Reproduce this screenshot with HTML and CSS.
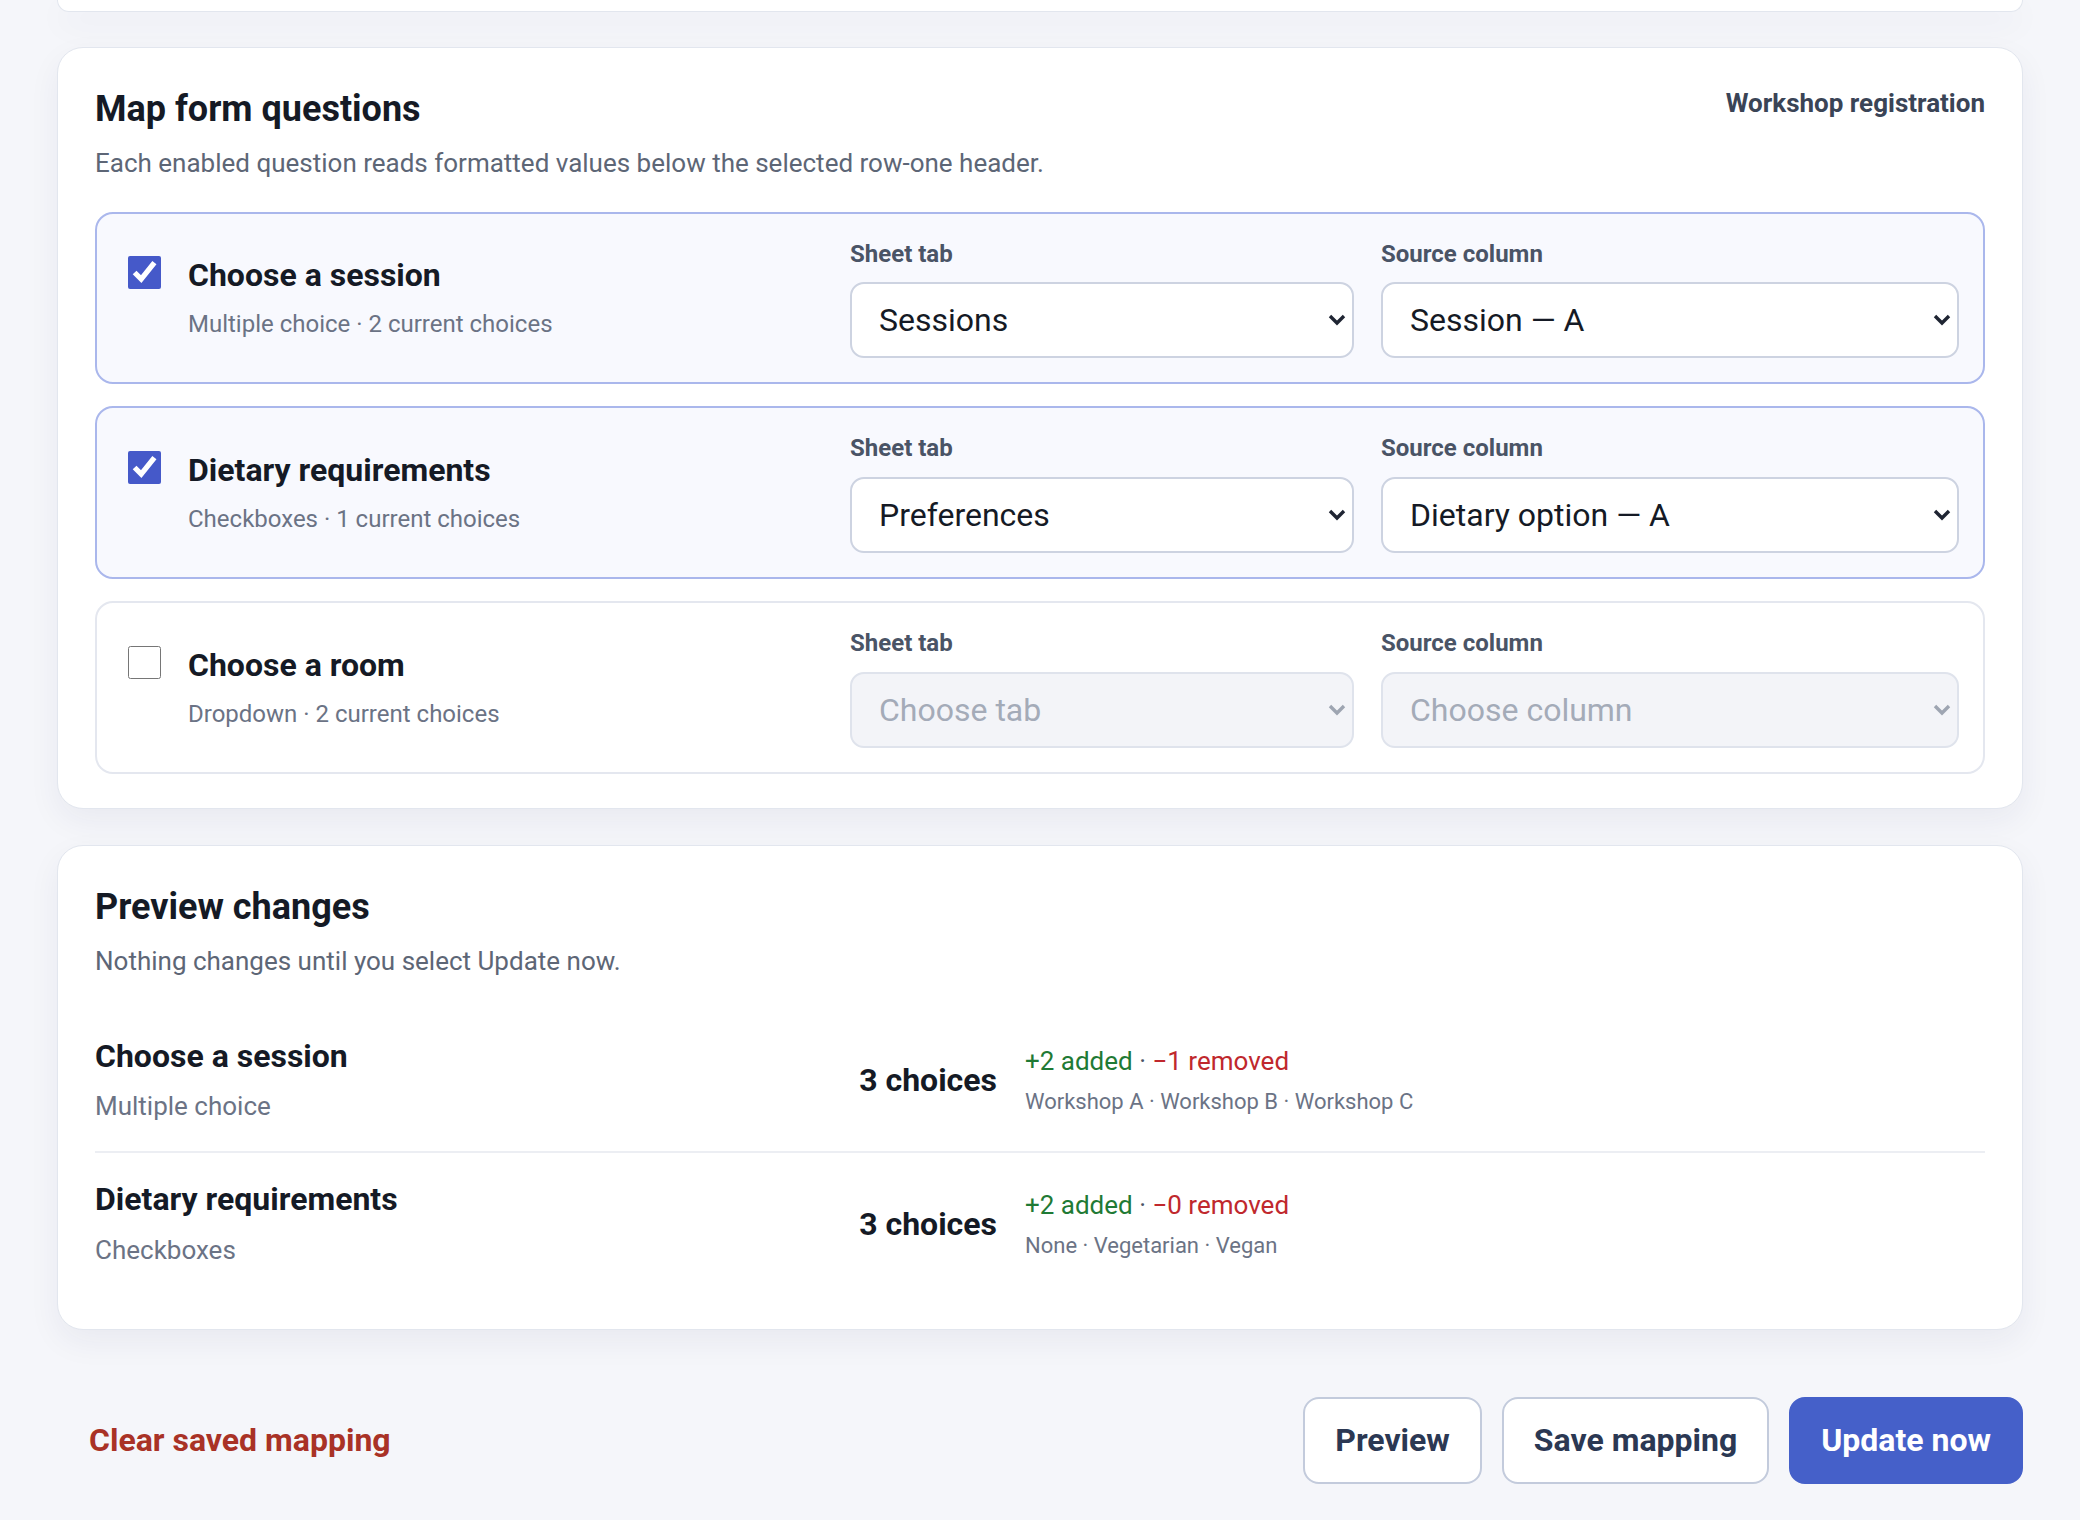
FILE: index.html
```html
<!DOCTYPE html>
<html>
  <head>
    <meta charset="UTF-8" />
    <title>Map form questions</title>
    <link rel="stylesheet" href="styles.css">
  </head>
  <body>
    <div class="page">
      <div class="card card-stub"></div>

      <section class="card">
        <header class="card-head">
          <div>
            <h2>Map form questions</h2>
            <p class="card-sub">Each enabled question reads formatted values below the selected row-one header.</p>
          </div>
          <span class="form-name">Workshop registration</span>
        </header>

        <div class="mapping-list">
          <div class="mapping is-on">
            <div class="q">
              <input type="checkbox" checked />
              <div>
                <div class="q-title">Choose a session</div>
                <div class="q-meta">Multiple choice · 2 current choices</div>
              </div>
            </div>
            <label class="field">
              <span class="field-label">Sheet tab</span>
              <span class="select-wrap">
                <select>
                  <option>Sessions</option>
                  <option>Preferences</option>
                </select>
                <svg class="chevron" viewBox="0 0 18 12"><polyline points="2,2 9,9 16,2" /></svg>
              </span>
            </label>
            <label class="field">
              <span class="field-label">Source column</span>
              <span class="select-wrap">
                <select>
                  <option>Session — A</option>
                  <option>Session — B</option>
                </select>
                <svg class="chevron" viewBox="0 0 18 12"><polyline points="2,2 9,9 16,2" /></svg>
              </span>
            </label>
          </div>

          <div class="mapping is-on">
            <div class="q">
              <input type="checkbox" checked />
              <div>
                <div class="q-title">Dietary requirements</div>
                <div class="q-meta">Checkboxes · 1 current choices</div>
              </div>
            </div>
            <label class="field">
              <span class="field-label">Sheet tab</span>
              <span class="select-wrap">
                <select>
                  <option>Preferences</option>
                  <option>Sessions</option>
                </select>
                <svg class="chevron" viewBox="0 0 18 12"><polyline points="2,2 9,9 16,2" /></svg>
              </span>
            </label>
            <label class="field">
              <span class="field-label">Source column</span>
              <span class="select-wrap">
                <select>
                  <option>Dietary option — A</option>
                  <option>Dietary option — B</option>
                </select>
                <svg class="chevron" viewBox="0 0 18 12"><polyline points="2,2 9,9 16,2" /></svg>
              </span>
            </label>
          </div>

          <div class="mapping">
            <div class="q">
              <input type="checkbox" />
              <div>
                <div class="q-title">Choose a room</div>
                <div class="q-meta">Dropdown · 2 current choices</div>
              </div>
            </div>
            <label class="field">
              <span class="field-label">Sheet tab</span>
              <span class="select-wrap is-disabled">
                <select disabled>
                  <option>Choose tab</option>
                </select>
                <svg class="chevron" viewBox="0 0 18 12"><polyline points="2,2 9,9 16,2" /></svg>
              </span>
            </label>
            <label class="field">
              <span class="field-label">Source column</span>
              <span class="select-wrap is-disabled">
                <select disabled>
                  <option>Choose column</option>
                </select>
                <svg class="chevron" viewBox="0 0 18 12"><polyline points="2,2 9,9 16,2" /></svg>
              </span>
            </label>
          </div>
        </div>
      </section>

      <section class="card">
        <header class="card-head">
          <div>
            <h2>Preview changes</h2>
            <p class="card-sub">Nothing changes until you select Update now.</p>
          </div>
        </header>

        <div class="preview-list">
          <div class="preview-row">
            <div>
              <div class="q-title">Choose a session</div>
              <div class="p-meta">Multiple choice</div>
            </div>
            <div class="count">3 choices</div>
            <div>
              <div class="delta"><span class="added">+2 added</span> · <span class="removed">−1 removed</span></div>
              <div class="choices">Workshop A · Workshop B · Workshop C</div>
            </div>
          </div>

          <div class="preview-row">
            <div>
              <div class="q-title">Dietary requirements</div>
              <div class="p-meta">Checkboxes</div>
            </div>
            <div class="count">3 choices</div>
            <div>
              <div class="delta"><span class="added">+2 added</span> · <span class="removed">−0 removed</span></div>
              <div class="choices">None · Vegetarian · Vegan</div>
            </div>
          </div>
        </div>
      </section>

      <footer class="actions">
        <button class="link-danger">Clear saved mapping</button>
        <div class="btn-row">
          <button class="btn">Preview</button>
          <button class="btn">Save mapping</button>
          <button class="btn btn-primary">Update now</button>
        </div>
      </footer>
    </div>
  </body>
</html>
```

FILE: styles.css
```css
:root {
  --page-bg: #f5f6fa;
  --card-border: #e2e6ee;
  --text: #151a25;
  --muted: #5d6676;
  --meta: #6b7385;
  --label: #4a5466;
  --accent: #4559c9;
  --on-border: #aab7ec;
  --on-bg: #f8f9fe;
  --off-border: #e4e7ef;
  --input-border: #cdd3e1;
  --added: #1f7a35;
  --removed: #c0282d;
  --danger: #a93226;
}

body {
  margin: 0;
  background: var(--page-bg);
  font-family: Roboto, "Noto Sans", sans-serif;
  color: var(--text);
}

.page {
  display: flex;
  flex-direction: column;
  gap: 36px;
  padding: 0 57px 37px;
}

.card {
  background: #ffffff;
  border: 1px solid var(--card-border);
  border-radius: 26px;
  box-shadow: 0 12px 32px rgba(30, 40, 80, 0.06);
  padding: 40px 37px 34px;
}

.card-stub {
  height: 11px;
  padding: 0;
  border-top: none;
  border-radius: 0 0 26px 26px;
  margin-bottom: -1px;
}

.card-head {
  display: flex;
  justify-content: space-between;
  align-items: flex-start;
  margin-bottom: 30px;
}

h2 {
  margin: 0;
  font-size: 36px;
  line-height: 1.2;
  font-weight: 700;
}

.card-sub {
  margin: 14px 0 0;
  font-size: 26px;
  line-height: 1.4;
  color: var(--muted);
}

.form-name {
  font-size: 26px;
  line-height: 1.2;
  font-weight: 700;
  color: #3a4456;
}

/* question mapping rows */

.mapping-list {
  display: flex;
  flex-direction: column;
  gap: 22px;
}

.mapping {
  display: grid;
  grid-template-columns: minmax(0, 1fr) 504px 578px;
  column-gap: 27px;
  align-items: center;
  padding: 26px 24px 24px 31px;
  border: 2px solid var(--off-border);
  border-radius: 18px;
  background: #ffffff;
}

.mapping.is-on {
  border-color: var(--on-border);
  background: var(--on-bg);
}

.q {
  display: flex;
  align-items: flex-start;
  gap: 27px;
}

.q input {
  flex: none;
  width: 33px;
  height: 33px;
  margin: 0;
  accent-color: var(--accent);
}

.q-title {
  font-size: 32px;
  line-height: 1.2;
  font-weight: 700;
}

.q-meta {
  margin-top: 14px;
  font-size: 24px;
  line-height: 1.4;
  color: var(--meta);
}

.field {
  display: flex;
  flex-direction: column;
  gap: 14px;
}

.field-label {
  font-size: 24px;
  line-height: 1.2;
  font-weight: 700;
  color: var(--label);
}

.select-wrap {
  position: relative;
  display: block;
}

select {
  appearance: none;
  display: block;
  width: 100%;
  height: 76px;
  font-family: inherit;
  font-size: 32px;
  color: var(--text);
  background: #ffffff;
  border: 2px solid var(--input-border);
  border-radius: 14px;
  padding: 0 40px 0 27px;
}

select:disabled {
  opacity: 1;
  color: #a4abb8;
  background: #f3f4f8;
  border-color: #dfe3ec;
}

.chevron {
  position: absolute;
  right: 8px;
  top: 50%;
  width: 18px;
  height: 12px;
  margin-top: -6px;
  pointer-events: none;
  fill: none;
  stroke: #1f2533;
  stroke-width: 3.4;
}

.is-disabled .chevron {
  stroke: #9ea5b2;
}

/* preview */

.preview-row {
  display: grid;
  grid-template-columns: minmax(0, 1fr) auto 960px;
  column-gap: 28px;
  align-items: center;
  padding: 27px 0;
  border-top: 2px solid #eceef3;
}

.preview-row:first-child {
  border-top: none;
}

.p-meta {
  margin-top: 13px;
  font-size: 26px;
  line-height: 1.4;
  color: var(--meta);
}

.count {
  font-size: 32px;
  line-height: 1.2;
  font-weight: 700;
  justify-self: end;
}

.delta {
  font-size: 26px;
  line-height: 1.4;
  color: #4a5466;
}

.added {
  color: var(--added);
}

.removed {
  color: var(--removed);
}

.choices {
  margin-top: 8px;
  font-size: 22px;
  line-height: 1.4;
  color: var(--meta);
}

/* footer */

.actions {
  display: flex;
  justify-content: space-between;
  align-items: center;
  margin-top: 31px;
  padding-left: 32px;
}

button {
  font-family: inherit;
  font-size: 32px;
  line-height: 1.2;
  font-weight: 700;
  cursor: pointer;
}

.link-danger {
  background: none;
  border: none;
  padding: 0;
  color: var(--danger);
}

.btn-row {
  display: flex;
  gap: 20px;
}

.btn {
  padding: 22px 30px;
  border: 2px solid #c3cbdc;
  border-radius: 16px;
  background: #ffffff;
  color: #2b3853;
}

.btn-primary {
  background: #4560c9;
  border-color: #4560c9;
  color: #ffffff;
}
```
